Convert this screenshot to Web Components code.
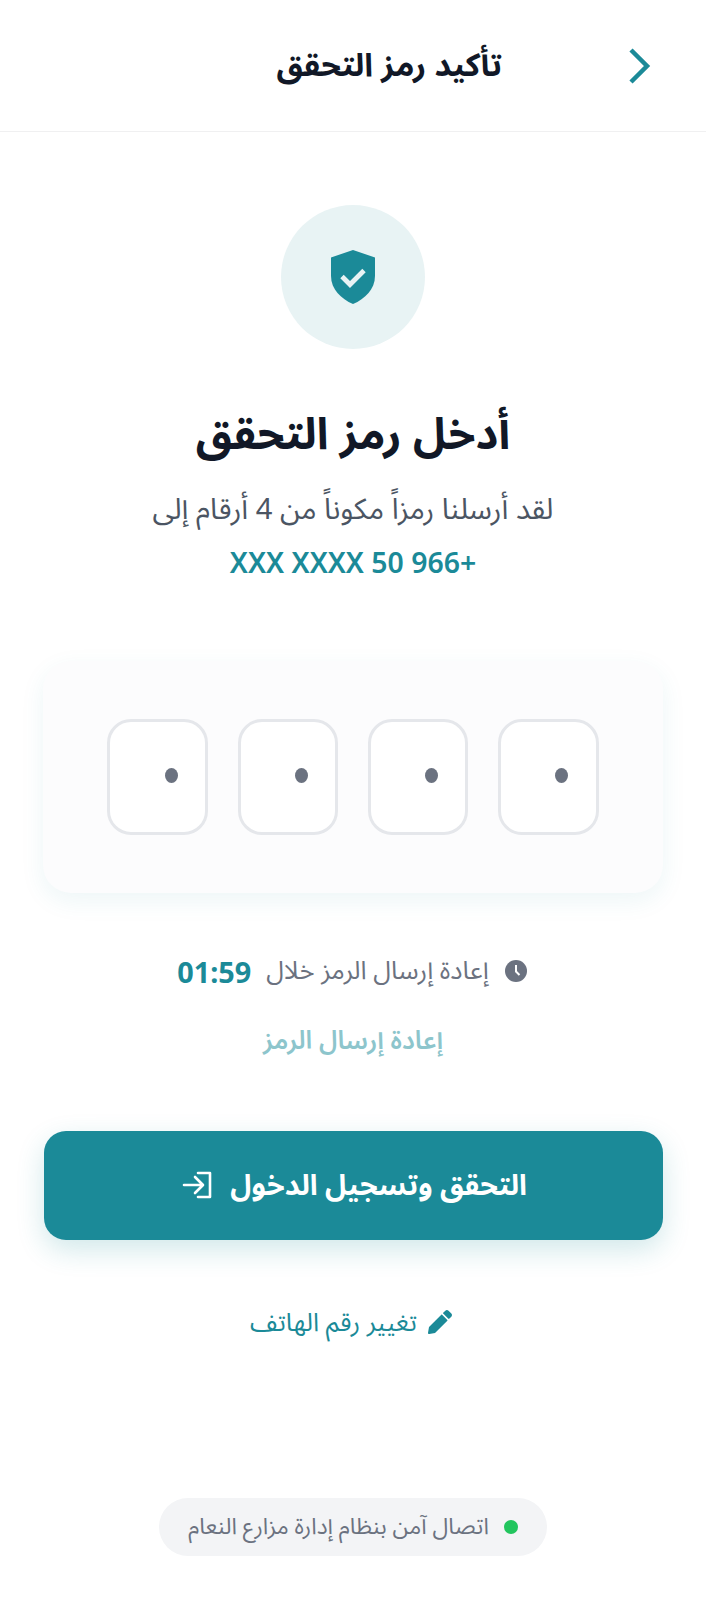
<!DOCTYPE html>
<html lang="ar" dir="rtl">
<head>
<meta charset="utf-8">
<title>تأكيد رمز التحقق</title>
<style>
  html, body { margin: 0; background: #fff; }
  body { font-family: "Noto Sans", "Noto Sans Arabic", "Open Sans", "DejaVu Sans", sans-serif; }
</style>
</head>
<body>
<otp-page></otp-page>

<script>
class AppBar extends HTMLElement {
  connectedCallback() {
    this.attachShadow({mode: "open"});
    this.shadowRoot.innerHTML = `
      <style>
        :host { display: flex; align-items: center; height: 131px; padding: 0 54px 0 0; border-bottom: 1px solid #f0f0f1; }
        svg { width: 24px; height: 36px; display: block; }
        h1 { margin: 0 126px 0 0; font-size: 32px; font-weight: 700; color: #111827; }
      </style>
      <svg viewBox="0 0 24 36" fill="none" stroke="#1b8a98" stroke-width="4.5"><path d="M3 2 L19 18 L3 34"/></svg>
      <h1><slot></slot></h1>
    `;
  }
}

class ShieldBadge extends HTMLElement {
  connectedCallback() {
    this.attachShadow({mode: "open"});
    this.shadowRoot.innerHTML = `
      <style>
        :host { display: flex; align-items: center; justify-content: center; width: 144px; height: 144px; border-radius: 50%; background: #e8f3f4; }
        svg { width: 44px; height: 54px; display: block; }
      </style>
      <svg viewBox="0 0 44 54">
        <path d="M22 0 L44 7.5 V26 C44 39 34 49 22 54 C10 49 0 39 0 26 V7.5 Z" fill="#1b8a98"/>
        <path d="M11 26.500 L19 34.500 L33 20.500" fill="none" stroke="#e8f3f4" stroke-width="4.800"/>
      </svg>
    `;
  }
}

class OtpBox extends HTMLElement {
  connectedCallback() {
    this.attachShadow({mode: "open"});
    this.shadowRoot.innerHTML = `
      <style>
        :host { display: flex; align-items: center; justify-content: center; box-sizing: border-box; width: 100.4px; height: 116px; padding: 0 0 4px 27px; background: #fff; border: 3px solid #e5e7eb; border-radius: 24px; }
        i { display: block; width: 13px; height: 15px; border-radius: 50%; background: #6b7280; }
      </style>
      <i></i>
    `;
  }
}

class OtpCard extends HTMLElement {
  connectedCallback() {
    this.attachShadow({mode: "open"});
    this.shadowRoot.innerHTML = `
      <style>
        :host { display: flex; justify-content: center; gap: 29.9px; box-sizing: border-box; width: 620px; height: 232px; padding: 58px 0; background: #fcfcfd; border-radius: 28px; box-shadow: 0 8px 24px rgba(27,138,152,.08); }
      </style>
      <slot></slot>
    `;
  }
}

class PrimaryButton extends HTMLElement {
  connectedCallback() {
    this.attachShadow({mode: "open"});
    this.shadowRoot.innerHTML = `
      <style>
        :host { display: flex; align-items: center; justify-content: center; gap: 18px; box-sizing: border-box; width: 619px; height: 108.5px; padding-left: 3px; background: #1b8a98; color: #fff; border-radius: 22px; font-size: 28.8px; font-weight: 700; box-shadow: 0 10px 28px rgba(27,138,152,.2); }
        svg { width: 30px; height: 28px; display: block; }
      </style>
      <slot></slot>
      <svg viewBox="0 0 30 28" fill="none" stroke="#fff" stroke-width="2.600" stroke-linecap="round" stroke-linejoin="round"><path d="M16 2 H28 V26 H16"/><path d="M2 14 H20 M13 6 L21 14 L13 22"/></svg>
    `;
  }
}

class SecurePill extends HTMLElement {
  connectedCallback() {
    this.attachShadow({mode: "open"});
    this.shadowRoot.innerHTML = `
      <style>
        :host { display: flex; align-items: center; gap: 15px; box-sizing: border-box; height: 58px; padding: 0 29px; background: #f3f4f6; border-radius: 29px; font-size: 22.8px; color: #6b7280; }
        i { display: block; width: 14px; height: 14px; border-radius: 50%; background: #22c55e; }
      </style>
      <i></i><slot></slot>
    `;
  }
}

class OtpPage extends HTMLElement {
  connectedCallback() {
    this.attachShadow({mode: "open"});
    this.shadowRoot.innerHTML = `
      <style>
        :host { display: block; height: 1600px; }
        main { display: flex; flex-direction: column; align-items: center; }
        shield-badge { margin-top: 73px; }
        h2 { margin: 52px 0 0; font-size: 44px; font-weight: 700; color: #111827; line-height: 62px; }
        .sub { margin: 25px 0 0; font-size: 29.1px; color: #4b5563; line-height: 40px; }
        .phone { margin: 14px 0 0; font-size: 28.4px; font-weight: 600; color: #1b8a98; line-height: 40px; direction: ltr; unicode-bidi: bidi-override; }
        otp-card { margin-top: 79px; }
        .timer { display: flex; align-items: center; margin-top: 58px; padding-right: 2px; height: 40px; font-size: 25.6px; color: #6b7280; }
        .timer svg { width: 22px; height: 22px; margin-left: 16px; }
        .timer b { margin-right: 15px; font-size: 28.8px; color: #1b8a98; }
        .resend { margin-top: 29px; font-size: 25.6px; font-weight: 600; color: #8dc5cc; line-height: 40px; }
        primary-button { margin-top: 71px; }
        .change { display: flex; align-items: center; gap: 11px; margin: 60.5px 4px 0 0; font-size: 25.6px; color: #1b8a98; line-height: 44px; }
        .change svg { width: 24px; height: 24px; }
        secure-pill { margin-top: 154px; }
      </style>
      <app-bar>تأكيد رمز التحقق</app-bar>
      <main>
        <shield-badge></shield-badge>
        <h2>أدخل رمز التحقق</h2>
        <p class="sub">لقد أرسلنا رمزاً مكوناً من 4 أرقام إلى</p>
        <p class="phone">XXX XXXX 50 966+</p>
        <otp-card>
          <otp-box></otp-box><otp-box></otp-box><otp-box></otp-box><otp-box></otp-box>
        </otp-card>
        <div class="timer">
          <svg viewBox="0 0 22 22"><circle cx="11" cy="11" r="11" fill="#6b7280"/><path d="M11 5 V11.500 L14.500 15" fill="none" stroke="#fff" stroke-width="2"/></svg>
          <span>إعادة إرسال الرمز خلال</span>
          <b>01:59</b>
        </div>
        <div class="resend">إعادة إرسال الرمز</div>
        <primary-button>التحقق وتسجيل الدخول</primary-button>
        <div class="change">
          <svg viewBox="0 0 512 512"><path fill="#1b8a98" d="M497.9 142.100l-46.100 46.100c-4.700 4.700-12.300 4.700-17 0l-111-111c-4.700-4.700-4.700-12.300 0-17l46.100-46.100c18.700-18.700 49.100-18.700 67.900 0l60.100 60.100c18.800 18.700 18.800 49.100 0 67.900zM284.200 99.800L21.600 362.400.4 483.900c-2.900 16.400 11.400 30.600 27.800 27.800l121.500-21.300 262.600-262.600c4.700-4.700 4.700-12.300 0-17l-111-111c-4.800-4.700-12.400-4.700-17.100 0z"/></svg>
          <span>تغيير رقم الهاتف</span>
        </div>
        <secure-pill>اتصال آمن بنظام إدارة مزارع النعام</secure-pill>
      </main>
    `;
  }
}

customElements.define("app-bar", AppBar);
customElements.define("shield-badge", ShieldBadge);
customElements.define("otp-box", OtpBox);
customElements.define("otp-card", OtpCard);
customElements.define("primary-button", PrimaryButton);
customElements.define("secure-pill", SecurePill);
customElements.define("otp-page", OtpPage);
</script>
</body>
</html>
